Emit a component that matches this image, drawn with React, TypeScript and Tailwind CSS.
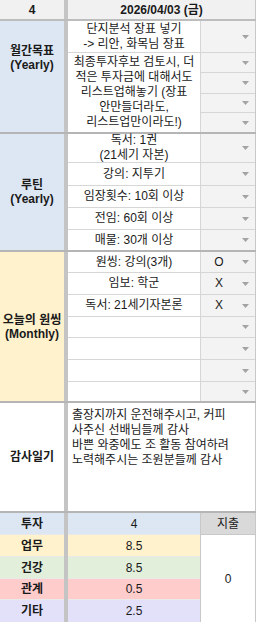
import React from "react";

const Arrow = () => (
  <svg width="7" height="4" viewBox="0 0 7 4" className="shrink-0 block">
    <path d="M0 0H7L3.5 4Z" fill="#a3a3a3" />
  </svg>
);

function Drop({ v, className = "" }: { v?: string; className?: string }) {
  return (
    <div className={`flex items-center bg-[#f3f3f3] ${className}`}>
      <span className="w-[36px] text-center text-[12px] leading-[15px]">{v}</span>
      <span className="ml-auto mr-[6px] flex">
        <Arrow />
      </span>
    </div>
  );
}

function Row({
  h,
  text,
  v,
  last,
}: {
  h: string;
  text?: React.ReactNode;
  v?: string;
  last?: boolean;
}) {
  return (
    <div className={`flex ${h} ${last ? "" : "border-b border-[#d6d6d6]"}`}>
      <div className="w-[133px] shrink-0 border-r border-[#d6d6d6] bg-white flex items-center justify-center text-center leading-[15px]">
        <div>{text}</div>
      </div>
      <Drop v={v} className="flex-1" />
    </div>
  );
}

function Label({ bg, lines, className = "" }: { bg: string; lines: string[]; className?: string }) {
  return (
    <div className={`w-[64px] shrink-0 flex flex-col items-center font-bold text-[12px] leading-[14px] ${bg} ${className}`}>
      {lines.map((l) => (
        <div key={l} className="whitespace-nowrap">
          {l}
        </div>
      ))}
    </div>
  );
}

const Sep = () => <div className="w-[4px] shrink-0 bg-[#c4c4c4]" />;

export default function App() {
  return (
    <div className="w-[256px] h-[622px] overflow-hidden bg-white text-[12px] text-[#1a1a1a] font-[Liberation_Sans,Noto_Sans_CJK_KR,sans-serif]">
      {/* header */}
      <div className="flex h-[21px] border-b-2 border-[#bdbdbd] bg-[#f1f1f1] font-bold">
        <div className="w-[64px] shrink-0 flex items-center justify-center">4</div>
        <Sep />
        <div className="flex-1 flex items-center justify-center border-r border-[#c8c8c8]">2026/04/03 (금)</div>
      </div>

      {/* 월간목표 */}
      <div className="flex h-[113px] border-b-2 border-[#b5b5b5]">
        <Label bg="bg-[#dde7f4]" lines={["월간목표", "(Yearly)"]} className="pt-[23px]" />
        <Sep />
        <div className="flex-1 flex flex-col border-r border-[#c8c8c8]">
          <Row
            h="h-[32px]"
            text={
              <>
                <div>단지분석 장표 넣기</div>
                <div>-&gt; 리안, 화목님 장표</div>
              </>
            }
          />
          <div className="flex h-[79px]">
            <div className="w-[133px] shrink-0 border-r border-[#d6d6d6] bg-white flex flex-col items-center justify-center text-center leading-[15px]">
              <div>최종투자후보 검토시, 더</div>
              <div>적은 투자금에 대해서도</div>
              <div>리스트업해놓기 (장표</div>
              <div>안만들더라도,</div>
              <div>리스트업만이라도!)</div>
            </div>
            <div className="flex-1 flex flex-col">
              <Drop className="h-[20px] border-b border-[#d6d6d6]" />
              <Drop className="h-[21px] border-b border-[#d6d6d6]" />
              <Drop className="h-[19px] border-b border-[#d6d6d6]" />
              <Drop className="flex-1" />
            </div>
          </div>
        </div>
      </div>

      {/* 루틴 */}
      <div className="flex h-[118px] border-b-2 border-[#b5b5b5]">
        <Label bg="bg-[#dde7f4]" lines={["루틴", "(Yearly)"]} className="justify-center" />
        <Sep />
        <div className="flex-1 flex flex-col border-r border-[#c8c8c8]">
          <Row
            h="h-[29px]"
            text={
              <>
                <div>독서: 1권</div>
                <div>(21세기 자본)</div>
              </>
            }
          />
          <Row h="h-[23px]" text="강의: 지투기" />
          <Row h="h-[22px]" text="임장횟수: 10회 이상" />
          <Row h="h-[22px]" text="전임: 60회 이상" />
          <Row h="h-[20px]" text="매물: 30개 이상" last />
        </div>
      </div>

      {/* 오늘의 원씽 */}
      <div className="flex h-[151px] border-b-2 border-[#b5b5b5]">
        <Label bg="bg-[#fff2cc]" lines={["오늘의 원씽", "(Monthly)"]} className="justify-center" />
        <Sep />
        <div className="flex-1 flex flex-col border-r border-[#c8c8c8]">
          <Row h="h-[21px]" text="원씽: 강의(3개)" v="O" />
          <Row h="h-[22px]" text="임보: 학군" v="X" />
          <Row h="h-[22px]" text="독서: 21세기자본론" v="X" />
          <Row h="h-[21px]" />
          <Row h="h-[22px]" />
          <Row h="h-[22px]" />
          <Row h="h-[19px]" last />
        </div>
      </div>

      {/* 감사일기 */}
      <div className="flex h-[110px] border-b-2 border-[#b5b5b5]">
        <Label bg="bg-white" lines={["감사일기"]} className="justify-center" />
        <Sep />
        <div className="flex-1 border-r border-[#c8c8c8] bg-white px-[4px] pt-[5px] leading-[15px] whitespace-nowrap">
          <div>출장지까지 운전해주시고, 커피</div>
          <div>사주신 선배님들께 감사</div>
          <div>바쁜 와중에도 조 활동 참여하려</div>
          <div>노력해주시는 조원분들께 감사</div>
        </div>
      </div>

      {/* bottom table */}
      <div className="flex h-[109px]">
        <div className="w-[64px] shrink-0 flex flex-col font-bold">
          <div className="h-[22px] flex items-center justify-center bg-[#dde7f4] border-b border-[#e9e9e9]">투자</div>
          <div className="h-[22px] flex items-center justify-center bg-[#fff2cc] border-b border-[#e9e9e9]">업무</div>
          <div className="h-[22px] flex items-center justify-center bg-[#e2efda] border-b border-[#e9e9e9]">건강</div>
          <div className="h-[21px] flex items-center justify-center bg-[#ffcccc] border-b border-[#e9e9e9]">관계</div>
          <div className="flex-1 flex items-center justify-center bg-[#e3e0fa]">기타</div>
        </div>
        <Sep />
        <div className="w-[133px] shrink-0 flex flex-col border-r border-[#c8c8c8]">
          <div className="h-[22px] flex items-center justify-center bg-[#dde7f4] border-b border-[#e9e9e9]">4</div>
          <div className="h-[22px] flex items-center justify-center bg-[#fff2cc] border-b border-[#e9e9e9]">8.5</div>
          <div className="h-[22px] flex items-center justify-center bg-[#e2efda] border-b border-[#e9e9e9]">8.5</div>
          <div className="h-[21px] flex items-center justify-center bg-[#ffcccc] border-b border-[#e9e9e9]">0.5</div>
          <div className="flex-1 flex items-center justify-center bg-[#e3e0fa]">2.5</div>
        </div>
        <div className="flex-1 flex flex-col border-r border-[#c8c8c8]">
          <div className="h-[22px] flex items-center justify-center bg-[#d9d9d9] border-b border-[#c8c8c8]">지출</div>
          <div className="flex-1 flex items-center justify-center bg-white">0</div>
        </div>
      </div>
    </div>
  );
}
